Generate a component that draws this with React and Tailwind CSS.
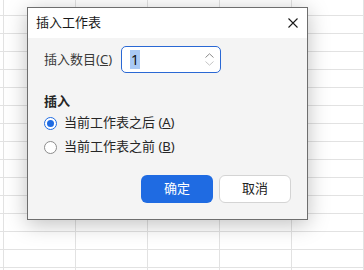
import React from "react";

const font = { fontFamily: "'Noto Sans', 'Noto Sans CJK SC', sans-serif" };

const Radio = ({ checked, label, hotkey }) => (
  <label className="flex items-center h-[24px] text-[13px] text-[#262626]">
    <span
      className={
        checked
          ? "w-[13px] h-[13px] rounded-full border border-[#1f6be2] bg-white flex items-center justify-center"
          : "w-[13px] h-[13px] rounded-full border border-[#8c8c8c] bg-white"
      }
    >
      {checked && <span className="w-[7px] h-[7px] rounded-full bg-[#1f6be2]" />}
    </span>
    <span className="ml-[7px]">
      {label} (<span className="underline">{hotkey}</span>)
    </span>
  </label>
);

const App = () => {
  const rows = Array.from({ length: 17 });
  const cols = Array.from({ length: 6 });

  return (
    <div className="relative w-[364px] h-[270px] overflow-hidden bg-white" style={font}>
      {/* sheet grid behind the dialog */}
      <div className="-ml-[68px] -mt-[2px]">
        {rows.map((_, r) => (
          <div key={r} className="flex">
            {cols.map((_, c) => (
              <div key={c} className="w-[72px] h-[18px] shrink-0 border-r border-b border-[#e2e2e2]" />
            ))}
          </div>
        ))}
      </div>

      {/* dialog */}
      <div className="absolute left-[27px] top-[7px] w-[281px] h-[213px] border border-[#6e6e6e] bg-[#f4f4f4] shadow-[0_4px_20px_rgba(0,0,0,0.25)] flex flex-col">
        <div className="h-[30px] bg-white flex items-center justify-between pl-[8px] pr-[9px]">
          <span className="text-[13px] text-[#1a1a1a]">插入工作表</span>
          <svg width="10" height="10" viewBox="0 0 10 10" className="text-[#1a1a1a]">
            <path d="M0.5 0.5 L9.5 9.5 M9.5 0.5 L0.5 9.5" stroke="currentColor" strokeWidth="1.1" />
          </svg>
        </div>

        <div className="flex-1 pl-[16px] pr-[16px] pt-[8px]">
          <div className="flex items-center">
            <span className="text-[13px] text-[#3a3a3a] w-[77px]">
              插入数目(<span className="underline">C</span>)
            </span>
            <div className="w-[100px] h-[27px] rounded-[5px] border-[1.5px] border-[#2a68d4] bg-white flex items-center justify-between pl-[8px] pr-[6px]">
              <span className="bg-[#a9c9f4] text-[14px] text-[#111] leading-[19px] px-[1px]">1</span>
              <div className="flex flex-col items-center gap-[3px]">
                <svg width="9" height="5" viewBox="0 0 9 5">
                  <path d="M0.5 4.5 L4.5 0.8 L8.5 4.5" fill="none" stroke="#8a8a8a" strokeWidth="1" />
                </svg>
                <svg width="9" height="5" viewBox="0 0 9 5">
                  <path d="M0.5 0.5 L4.5 4.2 L8.5 0.5" fill="none" stroke="#c4c4c4" strokeWidth="1" />
                </svg>
              </div>
            </div>
          </div>

          <div className="mt-[19px] text-[13px] font-bold text-[#262626] leading-[18px]">插入</div>
          <div className="mt-[1px] flex flex-col">
            <Radio checked label="当前工作表之后" hotkey="A" />
            <Radio label="当前工作表之前" hotkey="B" />
          </div>

          <div className="mt-[16px] flex justify-end gap-[6px]">
            <button className="w-[72px] h-[28px] rounded-[6px] bg-[#1f6be2] text-white text-[13px]">确定</button>
            <button className="w-[72px] h-[28px] rounded-[6px] bg-white border border-[#d4d4d4] text-[#222] text-[13px]">取消</button>
          </div>
        </div>
      </div>
    </div>
  );
};

export default App;
